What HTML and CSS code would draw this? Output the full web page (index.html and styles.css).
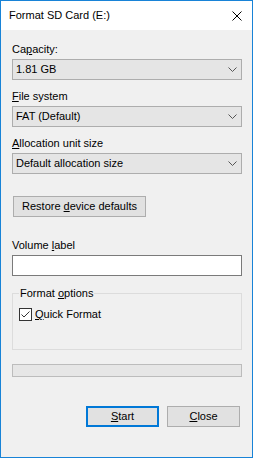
FILE: index.html
```html
<!DOCTYPE html>
<html>
<head>
<meta charset="utf-8">
<title>Format SD Card (E:)</title>
<link rel="stylesheet" href="styles.css">
</head>
<body>
<div class="window">
  <div class="titlebar">
    <span class="title">Format SD Card (E:)</span>
    <svg class="close-x" width="10" height="10" viewBox="0 0 10 10"><path d="M0.5 0.5 L9.5 9.5 M9.5 0.5 L0.5 9.5" stroke="#000" stroke-width="1" fill="none"/></svg>
  </div>
  <div class="content">
    <div class="label first">Ca<u>p</u>acity:</div>
    <div class="combo"><span>1.81 GB</span><svg class="chev" width="9" height="5" viewBox="0 0 9 5"><path d="M0.5 0.5 L4.5 4.5 L8.5 0.5" stroke="#555" stroke-width="1" fill="none"/></svg></div>
    <div class="label"><u>F</u>ile system</div>
    <div class="combo"><span>FAT (Default)</span><svg class="chev" width="9" height="5" viewBox="0 0 9 5"><path d="M0.5 0.5 L4.5 4.5 L8.5 0.5" stroke="#555" stroke-width="1" fill="none"/></svg></div>
    <div class="label"><u>A</u>llocation unit size</div>
    <div class="combo"><span>Default allocation size</span><svg class="chev" width="9" height="5" viewBox="0 0 9 5"><path d="M0.5 0.5 L4.5 4.5 L8.5 0.5" stroke="#555" stroke-width="1" fill="none"/></svg></div>
    <div class="btn restore"><span>Restore <u>d</u>evice defaults</span></div>
    <div class="label volume">Volume <u>l</u>abel</div>
    <div class="textbox"></div>
    <fieldset class="group">
      <legend>Format <u>o</u>ptions</legend>
      <div class="check-row">
        <span class="checkbox"><svg width="11" height="11" viewBox="0 0 11 11"><path d="M1.5 5.5 L4 8 L9.5 2.5" stroke="#333" stroke-width="1" fill="none"/></svg></span>
        <span><u>Q</u>uick Format</span>
      </div>
    </fieldset>
    <div class="progress"></div>
    <div class="buttons">
      <div class="btn default"><span><u>S</u>tart</span></div>
      <div class="btn"><span><u>C</u>lose</span></div>
    </div>
  </div>
</div>
</body>
</html>
```
FILE: styles.css
```css
html, body {
  margin: 0;
  padding: 0;
  background: #f0f0f0;
}
.window {
  width: 253px;
  height: 458px;
  box-sizing: border-box;
  border: 1px solid #1883d7;
  background: #f0f0f0;
  font-family: "Liberation Sans", Arial, sans-serif;
  font-size: 11px;
  line-height: 15px;
  color: #000;
  display: flex;
  flex-direction: column;
}
.titlebar {
  height: 29px;
  background: #fff;
  display: flex;
  align-items: center;
  justify-content: space-between;
  padding: 0 10px 0 8px;
  flex: none;
}
.title {
  font-size: 11px;
}
.close-x {
  display: block;
  margin-top: 1px;
}
.content {
  padding: 12px 10px 0 11px;
  display: flex;
  flex-direction: column;
}
u {
  text-decoration-thickness: 1px;
  text-underline-offset: 1px;
}
.label {
  height: 15px;
  margin-top: 9px;
  margin-bottom: 2px;
}
.label.first {
  margin-top: 0;
}
.label.volume {
  margin-top: 21px;
}
.combo {
  height: 21px;
  box-sizing: border-box;
  border: 1px solid #adadad;
  background: #e5e5e5;
  display: flex;
  align-items: center;
  justify-content: space-between;
  padding: 0 4px 0 3px;
}
.chev {
  display: block;
}
.btn {
  height: 21px;
  width: 73px;
  box-sizing: border-box;
  border: 1px solid #adadad;
  background: #e1e1e1;
  display: flex;
  align-items: center;
  justify-content: center;
  white-space: pre;
}
.btn.restore {
  width: 133px;
  margin: 22px 0 0 1px;
}
.btn.default {
  border: 2px solid #0078d7;
}
.textbox {
  height: 21px;
  box-sizing: border-box;
  border: 1px solid #7a7a7a;
  background: #fff;
}
.group {
  margin: 10px 0 0 0;
  border: 1px solid #dcdcdc;
  padding: 6px 6px 27px 6px;
  min-width: 0;
}
.group legend {
  padding: 0 1px;
  line-height: 15px;
}
.check-row {
  display: flex;
  align-items: center;
  height: 15px;
  gap: 3px;
}
.checkbox {
  width: 13px;
  height: 13px;
  box-sizing: border-box;
  border: 1px solid #333;
  background: #fff;
  display: flex;
  align-items: center;
  justify-content: center;
}
.checkbox svg {
  display: block;
}
.progress {
  margin-top: 14px;
  height: 13px;
  box-sizing: border-box;
  border: 1px solid #bcbcbc;
  background: #e6e6e6;
}
.buttons {
  margin-top: 29px;
  margin-right: 2px;
  display: flex;
  justify-content: flex-end;
  gap: 8px;
}
```
